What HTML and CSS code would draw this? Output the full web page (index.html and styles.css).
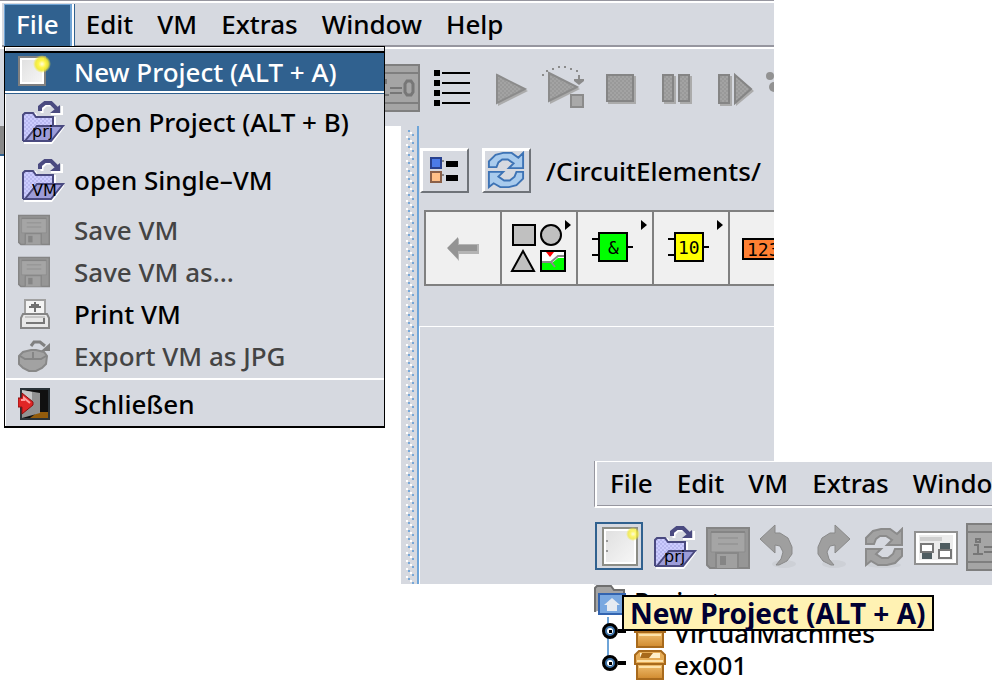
FILE: index.html
```html
<!DOCTYPE html>
<html lang="en">
<head>
<meta charset="utf-8">
<title>Circuit Editor</title>
<link rel="stylesheet" href="styles.css">
</head>
<body>
<svg class="sprite" aria-hidden="true">
  <defs>
    <pattern id="weave" width="4" height="4" patternUnits="userSpaceOnUse"><rect width="4" height="4" fill="#ccccff"/><path d="M0 0h2v2h-2zM2 2h2v2h-2z" fill="#b8b8f0"/></pattern>
    <pattern id="grain" width="4" height="4" patternUnits="userSpaceOnUse"><rect width="4" height="4" fill="#a3a3a3"/><path d="M0 0h2v2h-2zM2 2h2v2h-2z" fill="#999"/></pattern>
    <linearGradient id="wood" x1="0" y1="0" x2="0" y2="1"><stop offset="0" stop-color="#f3c477"/><stop offset="1" stop-color="#d08a2e"/></linearGradient>
    <linearGradient id="paper" x1="0" y1="0" x2="1" y2="1"><stop offset="0" stop-color="#dedede"/><stop offset="1" stop-color="#f8f8f8"/></linearGradient>
    <radialGradient id="glow"><stop offset="0" stop-color="#fffde0"/><stop offset=".4" stop-color="#fff64a"/><stop offset=".7" stop-color="#f2ea32" stop-opacity=".9"/><stop offset="1" stop-color="#f2ea32" stop-opacity="0"/></radialGradient>
  </defs>
  <symbol id="folder" viewBox="0 0 44 44">
    <path d="M2 44h28l12-16v-3h-8v-8H16l-2-4H4z" fill="#fff"/>
    <path d="M1 41V15l2-2h8l3 4h17v9" fill="url(#weave)" stroke="#4a4a80" stroke-width="2"/>
    <path d="M3 41L15 26h26L29 41z" fill="#9c9cd8" stroke="#4a4a80" stroke-width="2"/>
    <path d="M1 41h28" stroke="#4a4a80" stroke-width="2"/>
    <path d="M20 13V9l4-4h6l6 6" fill="none" stroke="#fff" stroke-width="3"/>
    <path d="M18 11V7l5-4h6l6 6" fill="none" stroke="#4a4a80" stroke-width="4"/>
    <path d="M29 14h11V6" fill="none" stroke="#fff" stroke-width="2"/>
    <path d="M38 5v8H28z" fill="#4a4a80"/>
  </symbol>
  <symbol id="floppy" viewBox="0 0 44 42">
    <path d="M1 1h42v40H4l-3-3z" fill="#969696" stroke="#858585" stroke-width="2"/>
    <path d="M5 5h34v20H5z" fill="#a5a5a5" stroke="#8b8b8b"/><path d="M5 5h34" stroke="#858585" stroke-width="2"/>
    <path d="M12 11h20M12 17h20" stroke="#989898" stroke-width="2"/>
    <path d="M10 41V26h22v15" fill="#a0a0a0" stroke="#888" stroke-width="2"/><path d="M14 29h6v9h-6z" fill="#858585"/>
  </symbol>
  <symbol id="init" viewBox="0 0 48 48">
    <path d="M1 1h46v46H1z" fill="#a5a5a5" stroke="#7f7f7f" stroke-width="2"/>
    <path d="M1 9h46M1 39h46" stroke="#7f7f7f" stroke-width="2"/>
    <path d="M10 16h4v3h-4zM8 22h4v9M7 31h10M18 24h12M18 29h12" fill="none" stroke="#777" stroke-width="2"/>
    <path d="M33 20l2-3h4l2 3v8l-2 3h-4l-2-3z" fill="none" stroke="#777" stroke-width="3"/>
  </symbol>
  <symbol id="cycle" viewBox="0 0 40 40">
    <path d="M2 17V11L9 4l8-2h9l7 5 5-5v16H23l5-5-6-4h-6l-4 3-2 5z"/>
    <path d="M38 22v7l-7 7-8 2h-9l-7-4-5 4V22h15l-5 5 6 4h6l5-4 2-5z"/>
  </symbol>
  <symbol id="box" viewBox="0 0 32 30">
    <path d="M3 13h26v16H3z" fill="url(#wood)" stroke="#a86a1c" stroke-width="2"/>
    <path d="M5 1h22l4 4v9H1V5z" fill="#e6ac56" stroke="#a86a1c" stroke-width="2"/>
    <path d="M6 3h20v5H6z" fill="#fff0ca"/><path d="M8 3h11l-4 5H6z" fill="#a86a1c"/><path d="M3 11h26M5 17h22" stroke="#fde2aa" stroke-width="2"/>
  </symbol>
</svg>

<main class="desktop">
  <section class="window main-window" aria-label="Editor">
    <nav class="menubar">
      <button class="menu-title active">File</button>
      <button class="menu-title">Edit</button>
      <button class="menu-title">VM</button>
      <button class="menu-title">Extras</button>
      <button class="menu-title">Window</button>
      <button class="menu-title">Help</button>
    </nav>
    <div class="toolbar main-tools">
      <button class="tool" aria-label="Initialise"><svg viewBox="0 0 56 56"><use href="#init" x="4" y="4" width="48" height="48"/></svg></button>
      <button class="tool" aria-label="List"><svg viewBox="0 0 56 56"><path d="M10 10h6v6h-6zM10 20h6v6h-6zM10 30h6v6h-6zM10 40h6v6h-6zM18 12h28v2H18zM18 22h28v2H18zM18 32h28v2H18zM18 42h28v2H18z"/></svg></button>
      <button class="tool" aria-label="Run"><svg viewBox="0 0 56 56"><path d="M18 16l30 15-30 15z" fill="#ababab"/><path d="M17 15l28 14-28 14z" fill="url(#grain)" stroke="#8b8b8b" stroke-width="2"/></svg></button>
      <button class="tool" aria-label="Run to breakpoint"><svg viewBox="0 0 56 56"><path d="M14 14l30 15-30 15z" fill="#ababab"/><path d="M13 13l28 14-28 14z" fill="url(#grain)" stroke="#8b8b8b" stroke-width="2"/><path d="M6 14h2v2H6zM10 10h2v2h-2zM16 8h2v2h-2zM22 6h2v2h-2zM28 6h2v2h-2zM34 8h2v2h-2zM40 10h2v2h-2zM42 15h2v4h4v2l-5 4-5-4v-2h4z" fill="#8b8b8b"/><path d="M35 35h12v12H35z" fill="#a9a9a9" stroke="#8b8b8b" stroke-width="2"/></svg></button>
      <button class="tool" aria-label="Stop"><svg viewBox="0 0 56 56"><path d="M16 16h28v28H16z" fill="#ababab"/><path d="M15 15h26v26H15z" fill="url(#grain)" stroke="#858585" stroke-width="2"/></svg></button>
      <button class="tool" aria-label="Pause"><svg viewBox="0 0 56 56"><path d="M16 16h12v28H16zM32 16h12v28H32z" fill="#ababab"/><path d="M15 15h10v26H15zM31 15h10v26H31z" fill="url(#grain)" stroke="#858585" stroke-width="2"/></svg></button>
      <button class="tool" aria-label="Single step"><svg viewBox="0 0 56 56"><path d="M16 16h12v30H16zM32 16l18 15-18 15z" fill="#ababab"/><path d="M15 15h10v28H15zM31 15l16 14-16 14z" fill="url(#grain)" stroke="#858585" stroke-width="2"/></svg></button>
      <button class="tool" aria-label="Steps"><svg viewBox="0 0 56 56"><circle cx="10" cy="16" r="4" fill="#929292"/><circle cx="14" cy="27" r="5" fill="#929292"/></svg></button>
    </div>
    <div class="workspace">
      <div class="side-pane"><span class="stub"></span></div>
      <div class="splitter"><svg aria-hidden="true"><defs><pattern id="bumps" width="8" height="8" patternUnits="userSpaceOnUse"><path d="M0 6h2v2H0zM4 2h2v2H4z" fill="#fff"/><path d="M2 0h2v2H2zM6 4h2v2H6z" fill="#78a8d8"/></pattern></defs><rect width="8" height="100%" fill="url(#bumps)"/></svg></div>
      <div class="content">
        <div class="pathbar">
          <button class="bevel" aria-label="Tree view"><svg viewBox="0 0 44 40"><path d="M9 7h10v10H9z" fill="#4b7be8" stroke="#29418d" stroke-width="2"/><path d="M9 21h10v10H9z" fill="#ffc088" stroke="#8b6048" stroke-width="2"/><path d="M20 10h2M20 24h2" stroke="#888" stroke-width="2"/><path d="M24 10h12v6H24zM24 24h12v6H24z"/></svg></button>
          <button class="bevel" aria-label="Refresh"><svg viewBox="0 0 44 40"><use href="#cycle" x="3" y="0" width="38" height="38" fill="#a9cbed" stroke="#3d73b5" stroke-width="2"/></svg></button>
          <span class="path">/CircuitElements/</span>
        </div>
        <div class="palette">
          <button class="part" aria-label="Back"><svg viewBox="1 1 74 72"><path d="M23 38l11-11v6h20v10H34v7z" fill="#b4b4b4"/><path d="M22 37l11-11v8h19v6H33v8z" fill="#949494"/></svg></button>
          <button class="part" aria-label="Shapes"><svg viewBox="1 1 74 72"><g fill="#c0c0c0" stroke="#000" stroke-width="2"><path d="M12 14h22v20H12z"/><circle cx="50" cy="24" r="10"/><path d="M11 60l11-20 11 20z"/><path d="M40 40h24v20H40z" fill="#fff"/></g><path d="M41 52h10l6-5h6v12H41z" fill="#0f0"/><path d="M41 51h9l7-6h6M50 51l4 5" fill="none" stroke="#888" stroke-width="2"/><path d="M45 41h8l-4 5z" fill="#f00"/><path d="M64 9l6 5-6 5z"/></svg></button>
          <button class="part" aria-label="Gates"><svg viewBox="1 1 74 72"><path d="M15 28h6M15 44h6M49 36h7" stroke="#000" stroke-width="2"/><path d="M22 22h28v28H22z" fill="#0f0" stroke="#000" stroke-width="2"/><text class="glyph" x="31" y="43">&amp;</text><path d="M64 9l6 5-6 5z"/></svg></button>
          <button class="part" aria-label="Binary"><svg viewBox="1 1 74 72"><path d="M15 28h6M15 44h6M49 36h7" stroke="#000" stroke-width="2"/><path d="M22 22h28v28H22z" fill="#ff0" stroke="#000" stroke-width="2"/><text class="glyph" x="25" y="43">10</text><path d="M64 9l6 5-6 5z"/></svg></button>
          <button class="part" aria-label="Numbers"><svg viewBox="1 1 74 72"><path d="M14 28h46v20H14z" fill="#ff8033" stroke="#000" stroke-width="2"/><text class="glyph" x="18" y="45">123</text></svg></button>
        </div>
        <div class="canvas"></div>
      </div>
    </div>
  </section>

  <div class="menu" role="menu">
    <button class="item selected" role="menuitem"><svg class="icon" viewBox="0 0 48 38"><path d="M1 4h26v28H1z" fill="url(#paper)" stroke="#808080" stroke-width="2"/><path d="M3 6h22v24H3z" fill="none" stroke="#fff" stroke-width="2"/><circle cx="24" cy="11" r="9" fill="url(#glow)"/></svg>New Project (ALT + A)</button>
    <button class="item tall" role="menuitem"><svg class="icon" viewBox="0 0 48 44"><use href="#folder" x="4" width="44" height="44"/><text class="tag" x="14" y="37">prj</text></svg>Open Project (ALT + B)</button>
    <button class="item tall" role="menuitem"><svg class="icon" viewBox="0 0 48 44"><use href="#folder" x="4" width="44" height="44"/><text class="tag" x="14" y="38">VM</text></svg>open Single–VM</button>
    <button class="item" role="menuitem" disabled><svg class="icon" viewBox="0 0 48 38"><use href="#floppy" y="3" width="32" height="32"/></svg>Save VM</button>
    <button class="item" role="menuitem" disabled><svg class="icon" viewBox="0 0 48 38"><use href="#floppy" y="3" width="32" height="32"/></svg>Save VM as...</button>
    <button class="item" role="menuitem"><svg class="icon" viewBox="0 0 48 38"><path d="M7 19V5h20v14" fill="#f4f4f4" stroke="#a0a0a0" stroke-width="2"/><path d="M16 7h2v2h3v2h2v2h-5v4h-2v-4h-5v-2h2V9h3z" fill="#707070"/><path d="M5 19h24l2 4v10H3V23z" fill="#e8e8e8" stroke="#858585" stroke-width="2"/><path d="M7 22h20" stroke="#c4c4c4" stroke-width="2"/><path d="M8 28h18v-5" fill="none" stroke="#777" stroke-width="2"/></svg>Print VM</button>
    <button class="item" role="menuitem" disabled><svg class="icon" viewBox="0 0 48 38"><path d="M1 19l4-4 8-2h5l8 2 3 4-1 8-4 4-6 3h-7l-6-3-4-4z" fill="#a2a2a2" stroke="#888" stroke-width="2"/><path d="M2 19l5 3h16l5-3M15 15v6" fill="none" stroke="#858585" stroke-width="2"/><path d="M13 9l3-4h6l5 4" fill="none" stroke="#808080" stroke-width="3"/><path d="M32 6v8h-9z" fill="#808080"/></svg>Export VM as JPG</button>
    <hr class="rule">
    <button class="item last" role="menuitem"><svg class="icon" viewBox="0 0 48 38"><path d="M3 4h28v30H3z" fill="#101010" stroke="#2b3338" stroke-width="2"/><path d="M20 27h10v6H12z" fill="#935c0c"/><path d="M4 5l18 3v20L4 33z" fill="#929292"/><path d="M4 5l10 2v8L4 10z" fill="#c6c6c6"/><path d="M0 13h4V8l11 9v3L4 29v-7H0z" fill="#e02626" stroke="#8d1010"/><path d="M3 15h3v-2l6 5" fill="none" stroke="#ff9c9c" stroke-width="2"/></svg>Schließen</button>
  </div>

  <section class="window second-window" aria-label="Project window">
    <nav class="menubar">
      <button class="menu-title">File</button>
      <button class="menu-title">Edit</button>
      <button class="menu-title">VM</button>
      <button class="menu-title">Extras</button>
      <button class="menu-title">Window</button>
    </nav>
    <div class="toolbar">
      <button class="tool small" aria-label="New Project"><svg viewBox="0 0 53 53"><path d="M2 4h46v46H2z" fill="none" stroke="#30618f" stroke-width="2"/><path d="M9 9h34v37H9z" fill="url(#paper)" stroke="#8c8d86" stroke-width="2"/><path d="M11 11h30v33H11z" fill="none" stroke="#fff" stroke-width="2"/><path d="M12 22h2M12 32h2" stroke="#999" stroke-width="2"/><circle cx="39" cy="15" r="7" fill="url(#glow)" opacity=".8"/></svg></button>
      <button class="tool small" aria-label="Open Project"><svg viewBox="0 0 53 53"><use href="#folder" x="7" y="6" width="44" height="44"/><text class="tag" x="17" y="43">prj</text></svg></button>
      <button class="tool small" aria-label="Save"><svg viewBox="0 0 53 53"><use href="#floppy" x="6" y="8" width="44" height="42"/></svg></button>
      <button class="tool small" aria-label="Undo"><svg viewBox="0 0 53 53"><ellipse cx="31" cy="45" rx="12" ry="4" fill="#cdd0d6"/><path d="M7 20L22 6v8h5l8 5 4 9v7l-5 7-8 4h-3l5-6 2-7-3-6-5-1v8z" fill="#9f9f9f" stroke="#898989"/></svg></button>
      <button class="tool small" aria-label="Redo"><svg viewBox="0 0 53 53"><ellipse cx="28" cy="45" rx="12" ry="4" fill="#cdd0d6"/><path d="M44 20L29 6v8h-5l-8 5-4 9v7l5 7 8 4h3l-5-6-2-7 3-6 5-1v8z" fill="#9f9f9f" stroke="#898989"/></svg></button>
      <button class="tool small" aria-label="Refresh"><svg viewBox="0 0 53 53"><ellipse cx="25" cy="46" rx="17" ry="3" fill="#cdd0d6"/><use href="#cycle" x="5" y="8" width="40" height="40" fill="#a2a2a2" stroke="#8b8b8b" stroke-width="2"/></svg></button>
      <button class="tool small" aria-label="Panels"><svg viewBox="0 0 53 53"><path d="M3 13h42v32H3z" fill="#fff" stroke="#919191" stroke-width="2"/><path d="M7 16h34v25H7z" fill="#ececec"/><path d="M8 18h22v4H8z" fill="#cecece"/><path d="M9 25h12v8H9z" fill="#fff" stroke="#777" stroke-width="2"/><path d="M10 34h10v6H10zM28 24h10v6H28z" fill="#4e5c60"/><path d="M27 31h12v8H27z" fill="#fff" stroke="#777" stroke-width="2"/></svg></button>
      <button class="tool small" aria-label="Initialise"><svg viewBox="0 0 53 53"><use href="#init" x="1" y="4" width="48" height="48"/></svg></button>
    </div>
    <ul class="tree">
      <li class="node root"><svg class="node-icon" viewBox="0 0 32 32"><path d="M1 27V3l2-2h14l3 4h10v10" fill="#a4a4a4" stroke="#6f6f6f" stroke-width="2"/><path d="M5 9h26v20H5z" fill="#79a8e0" stroke="#3264b0" stroke-width="2"/><path d="M18 13l8 7h-3v6H13v-6h-3z" fill="#e6ebf1"/></svg>Projects</li>
      <li class="node"><svg class="handle" viewBox="0 0 24 32"><path d="M6 0v32" stroke="#6ea4d8" stroke-width="2"/><circle cx="8" cy="14" r="6" fill="#fff" stroke="#000" stroke-width="4"/><circle cx="8" cy="14" r="4" fill="none" stroke="#3d73a9" stroke-width="2"/><path d="M7 13h3v3H7zM16 12h8v4h-8z"/></svg><svg class="node-icon" viewBox="0 0 32 32"><use href="#box" y="1" width="32" height="30"/></svg>VirtualMachines</li>
      <li class="node"><svg class="handle" viewBox="0 0 24 32"><path d="M6 0v12" stroke="#6ea4d8" stroke-width="2"/><circle cx="8" cy="14" r="6" fill="#fff" stroke="#000" stroke-width="4"/><circle cx="8" cy="14" r="4" fill="none" stroke="#3d73a9" stroke-width="2"/><path d="M7 13h3v3H7zM16 12h8v4h-8z"/></svg><svg class="node-icon" viewBox="0 0 32 32"><use href="#box" y="1" width="32" height="30"/></svg>ex001</li>
    </ul>
  </section>
  <div class="tooltip" role="tooltip">New Project (ALT + A)</div>
</main>
</body>
</html>
```
FILE: styles.css
```css
* { box-sizing: border-box; }

body {
  margin: 0;
  background: #fff;
  color: #000;
  font: 500 26px/32px "Noto Sans", "Open Sans", sans-serif;
}

button {
  margin: 0;
  padding: 0;
  border: 0;
  background: none;
  color: inherit;
  font: inherit;
}

svg { display: block; flex: none; }
.sprite { position: absolute; width: 0; height: 0; }

.desktop { position: relative; min-height: 100vh; overflow: hidden; }

.window { position: absolute; overflow: hidden; }
.main-window { left: 0; top: 0; width: 77.4%; }
.second-window { left: 59.4%; top: 461px; right: 0.8%; background: #fff; }

.menubar {
  display: flex;
  height: 49px;
  padding: 1px 0 0 2px;
  border-top: 1px solid #96969f;
  border-bottom: 2px solid #fff;
  background: #d6d9e0;
  box-shadow: inset 2px 2px #fff, inset 0 -2px #96969f;
}
.second-window .menubar {
  height: 47px;
  padding-left: 3px;
  border-top: 0;
  border-left: 1px solid #96969f;
  box-shadow: inset 2px 1px #fff, inset 0 -1px #96969f;
}

.menu-title { padding: 0 12px 2px; white-space: nowrap; }
.menu-title.active {
  margin: 2px 2px 0;
  padding: 0 11px 4px;
  border: solid #6fa3d4;
  border-width: 1px 2px 0 1px;
  box-shadow: 2px 0 #fff, 3px 0 #30618f;
  background: #30618f;
  color: #fff;
}

.toolbar { display: flex; height: 77px; overflow: hidden; padding: 11px 0 0; background: #d6d9e0; }
.main-tools { padding-left: 368px; }
.tool { flex: none; width: 56px; height: 56px; }
.tool svg { width: 100%; height: 100%; }
.tool.small { width: 53px; height: 53px; }

.workspace { display: flex; height: 458px; }
.side-pane { flex: none; width: 401px; background: #fff; }
.stub { display: block; width: 4px; height: 30px; background: #888; border-bottom: 2px solid #30618f; }
.splitter { flex: none; width: 18px; padding: 4px 0 0 5px; background: #d6d9e0; border-right: 2px solid #6ea4d8; }
.splitter svg { width: 8px; height: 100%; }
.content { display: flex; flex: 1; flex-direction: column; min-width: 0; overflow: hidden; background: #d6d9e0; }

.pathbar { display: flex; align-items: center; gap: 13px; padding: 22px 0 0 1px; }
.bevel {
  flex: none;
  width: 49px;
  height: 45px;
  border: 2px solid;
  border-color: #fff #6f7379 #6f7379 #fff;
  box-shadow: inset 1px 1px #fff;
}
.bevel svg { width: 44px; height: 40px; }
.path { padding-left: 2px; white-space: nowrap; }

.palette { display: flex; width: max-content; margin: 17px 0 0 5px; border: 1px solid #808080; }
.part { flex: none; width: 76px; height: 74px; border: 1px solid #808080; background: #f0f0f0; }
.part svg { width: 74px; height: 72px; }
.glyph { font: 18px "DejaVu Sans Mono", monospace; }
.canvas { flex: 1; margin-top: 40px; border: solid #fff; border-width: 1px 0 0 1px; }

.menu {
  position: absolute;
  left: 4px;
  top: 46px;
  width: 381px;
  padding-top: 4px;
  border: solid #000;
  border-width: 1px 1px 2px;
  background: #d6d9e0;
  box-shadow: inset 1px 1px #fff;
}
.item { display: flex; align-items: center; width: 100%; height: 42px; padding: 0 0 2px 13px; gap: 8px; text-align: left; white-space: nowrap; }
.item.tall { height: 58px; }
.item.last { height: 45px; padding-bottom: 0; }
.item:disabled { color: #444; }
.item.selected { height: 43px; border-top: 2px solid #000; border-bottom: 1px solid #30618f; background: #30618f; box-shadow: inset 0 -2px #fff; color: #fff; }
.icon { width: 48px; height: 38px; }
.tall .icon { height: 44px; }
.tag { font: 16px "DejaVu Sans", sans-serif; }
.rule { height: 3px; margin: 0; border: solid #fff; border-width: 2px 0 0; }

.tree { margin: 0; padding: 0; list-style: none; }
.node { display: flex; align-items: center; gap: 8px; height: 32px; padding-left: 8px; }
.node.root { padding-left: 0; }
.node-icon { width: 32px; height: 32px; }
.handle { width: 24px; height: 32px; }

.tooltip {
  position: absolute;
  left: 62.2%;
  top: 595px;
  height: 36px;
  padding: 0 6px;
  border: 2px solid #000;
  background: #fff2b3;
  color: #000033;
  font-size: 28px;
  font-weight: 700;
  white-space: nowrap;
}
```
